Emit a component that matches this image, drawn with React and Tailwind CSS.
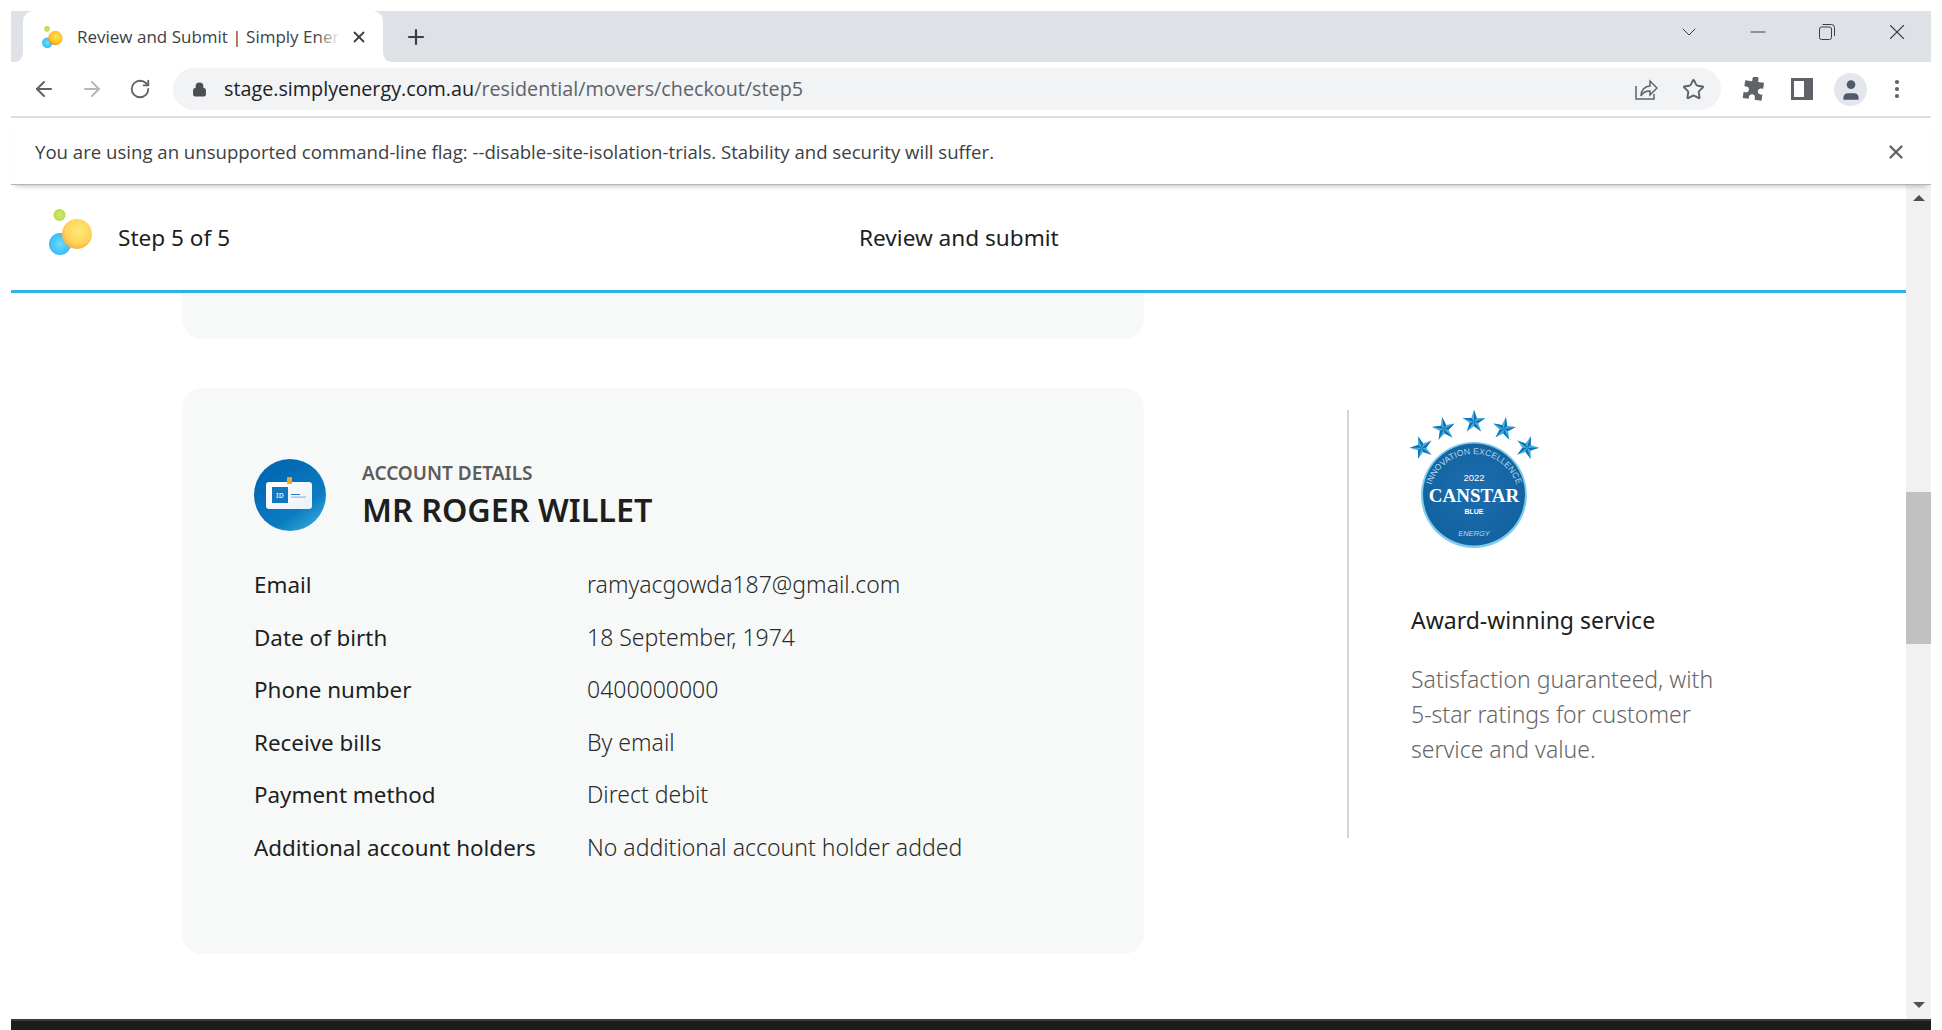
import { ArrowLeft, ArrowRight, RotateCw, Lock, Star, X, Plus, ChevronDown, Minus, MoreVertical, User } from 'lucide-react'

const pageFont = "font-['Noto_Sans',sans-serif]"
const chromeFont = "font-['Open_Sans',sans-serif]"

const rows = [
  ['Email', 'ramyacgowda187@gmail.com'],
  ['Date of birth', '18 September, 1974'],
  ['Phone number', '0400000000'],
  ['Receive bills', 'By email'],
  ['Payment method', 'Direct debit'],
  ['Additional account holders', 'No additional account holder added'],
]

function BubbleLogo({ size = 46, id = 'a', strong = false }) {
  return (
    <svg width={size} height={size} viewBox="0 0 46 46">
      <defs>
        <radialGradient id={`${id}-y`} cx="0.55" cy="0.4" r="0.65">
          <stop offset="0" stopColor={strong ? '#ffe24a' : '#ffe97a'} />
          <stop offset="0.65" stopColor={strong ? '#ffc524' : '#ffd45a'} />
          <stop offset="1" stopColor={strong ? '#ee7a18' : '#f7a83c'} />
        </radialGradient>
        <radialGradient id={`${id}-b`} cx="0.5" cy="0.5" r="0.6">
          <stop offset="0" stopColor="#6fdcff" />
          <stop offset="1" stopColor="#2eb4f2" />
        </radialGradient>
        <radialGradient id={`${id}-g`} cx="0.5" cy="0.5" r="0.6">
          <stop offset="0" stopColor="#d2e66c" />
          <stop offset="1" stopColor="#b4d84a" />
        </radialGradient>
      </defs>
      <circle cx="10.5" cy="6" r="6" fill={`url(#${id}-g)`} />
      <circle cx="11" cy="35" r="11" fill={`url(#${id}-b)`} />
      <circle cx="28" cy="25" r="15" fill={`url(#${id}-y)`} />
    </svg>
  )
}

function IdIcon() {
  return (
    <svg width="72" height="72" viewBox="0 0 72 72">
      <defs>
        <linearGradient id="id-bg" x1="0.3" y1="0.2" x2="0.9" y2="1">
          <stop offset="0" stopColor="#0369b5" />
          <stop offset="0.6" stopColor="#0b7cc0" />
          <stop offset="1" stopColor="#3db0dc" />
        </linearGradient>
        <linearGradient id="id-card" x1="0" y1="0" x2="1" y2="1">
          <stop offset="0" stopColor="#ffffff" />
          <stop offset="1" stopColor="#e9f1f8" />
        </linearGradient>
      </defs>
      <circle cx="36" cy="36" r="36" fill="url(#id-bg)" />
      <rect x="12" y="23" width="46" height="27" rx="3" fill="url(#id-card)" />
      <rect x="33" y="18" width="5" height="7" rx="1" fill="#f0a727" />
      <rect x="18" y="28" width="16" height="16" fill="#1477bd" />
      <text x="26" y="39" textAnchor="middle" fontSize="7" fontWeight="700" fill="#bfe0f5" fontFamily="Noto Sans, sans-serif">ID</text>
      <rect x="37" y="35" width="9" height="1" fill="#2a7fc0" />
      <rect x="37" y="37.5" width="15" height="1.2" fill="#8dbde0" />
    </svg>
  )
}

function polar(cx, cy, r, deg) {
  const a = ((deg - 90) * Math.PI) / 180
  return `${(cx + r * Math.cos(a)).toFixed(1)},${(cy + r * Math.sin(a)).toFixed(1)}`
}

// one star: light body with a darker facet on each arm
function BadgeStar({ x, y, rot }) {
  const r = 12
  const inner = r * 0.38
  const body = []
  const facets = []
  for (let i = 0; i < 5; i++) {
    const d = rot + i * 72
    body.push(polar(x, y, r, d), polar(x, y, inner, d + 36))
    facets.push(`${x},${y} ${polar(x, y, r, d)} ${polar(x, y, inner, d + 36)}`)
  }
  return (
    <g>
      <polygon points={body.join(' ')} fill="#45aee0" />
      {facets.map((f) => (
        <polygon key={f} points={f} fill="#0f6fae" />
      ))}
    </g>
  )
}

function CanstarBadge() {
  return (
    <svg width="132" height="140" viewBox="0 0 132 140" className="-ml-[3px]">
      <defs>
        <radialGradient id="disc" cx="0.5" cy="0.45" r="0.6">
          <stop offset="0" stopColor="#1f6cad" />
          <stop offset="1" stopColor="#10629f" />
        </radialGradient>
        <path id="arc" d="M 21 89 A 45 45 0 0 1 111 89" />
      </defs>
      <BadgeStar x={13.7} y={37.7} rot={-18} />
      <BadgeStar x={36} y={19} rot={-9} />
      <BadgeStar x={66} y={11.7} rot={0} />
      <BadgeStar x={96} y={19} rot={9} />
      <BadgeStar x={119} y={37.7} rot={18} />
      <circle cx="66" cy="85" r="53" fill="#7fcbec" />
      <circle cx="66" cy="84.5" r="51" fill="url(#disc)" />
      <text fontSize="8.5" fill="#b5d8ee" fontFamily="Liberation Sans, sans-serif" letterSpacing="0.1">
        <textPath href="#arc" startOffset="50%" textAnchor="middle">INNOVATION EXCELLENCE</textPath>
      </text>
      <text x="66" y="71" textAnchor="middle" fontSize="9.5" fill="#fff" fontFamily="Liberation Sans, sans-serif">2022</text>
      <text x="66" y="92" textAnchor="middle" fontSize="19" fontWeight="700" fill="#fff" fontFamily="Liberation Serif, serif">CANSTAR</text>
      <text x="66" y="104" textAnchor="middle" fontSize="7" fontWeight="700" fill="#fff" fontFamily="Liberation Sans, sans-serif">BLUE</text>
      <text x="66" y="126" textAnchor="middle" fontSize="7.5" fontStyle="italic" fill="#b5d8ee" fontFamily="Liberation Sans, sans-serif">ENERGY</text>
    </svg>
  )
}

function TabCorner({ flip }) {
  return (
    <svg width="10" height="10" viewBox="0 0 10 10" className={flip ? 'absolute bottom-0 -right-[10px] -scale-x-100' : 'absolute bottom-0 -left-[10px]'}>
      <path d="M10 0 V10 H0 Q10 10 10 0 Z" fill="#fff" />
    </svg>
  )
}

function TabStrip() {
  return (
    <div className="flex h-[51px] shrink-0 items-end bg-[#dee1e6]">
      <div className="relative ml-[12px] flex h-[51px] w-[360px] items-center rounded-t-[10px] bg-white pl-[19px]">
        <TabCorner />
        <TabCorner flip />
        <BubbleLogo size={22} id="fav" strong />
        <div className={`relative ml-[13px] w-[263px] overflow-hidden whitespace-nowrap text-[17px] text-[#3c4043] ${chromeFont}`}>
          Review and Submit | Simply Energy
          <div className="absolute inset-y-0 right-0 w-[24px] bg-gradient-to-r from-white/0 to-white" />
        </div>
        <X size={18} strokeWidth={2.4} className="ml-[10px] text-[#3c4043]" />
      </div>
      <Plus size={24} strokeWidth={2.2} className="mb-[13px] ml-[21px] text-[#3c4043]" />
      <div className="flex-1" />
      <div className="flex h-full items-center pb-[9px] text-[#3c4043]">
        <ChevronDown size={24} strokeWidth={1} />
        <Minus size={24} strokeWidth={1} className="ml-[45px]" />
        <svg width="16" height="16" viewBox="0 0 16 16" fill="none" stroke="currentColor" strokeWidth="1" className="ml-[49px]">
          <rect x="0.5" y="3" width="12" height="12.5" rx="2" />
          <path d="M3.5 0.5 H12.5 Q15.5 0.5 15.5 3.5 V12" />
        </svg>
        <X size={26} strokeWidth={1} className="ml-[49px] mr-[21px]" />
      </div>
    </div>
  )
}

function Toolbar() {
  return (
    <div className="flex h-[56px] shrink-0 items-center border-b-2 border-[#dcdcdc] text-[#5f6368]">
      <ArrowLeft size={24} strokeWidth={2} className="ml-[21px]" />
      <ArrowRight size={24} strokeWidth={2} className="ml-[24px] text-[#b4b7bb]" />
      <RotateCw size={22} strokeWidth={2} className="ml-[25px]" />
      <div className="ml-[22px] flex h-[42px] w-[1548px] items-center rounded-full bg-[#f1f3f4] pl-[19px]">
        <Lock size={15} strokeWidth={2.5} fill="currentColor" className="text-[#4a4d51]" />
        <div className={`ml-[17px] text-[19.75px] text-[#5f6368] ${chromeFont}`}>
          <span className="text-[#202124]">stage.simplyenergy.com.au</span>/residential/movers/checkout/step5
        </div>
        <div className="flex-1" />
        <svg width="24" height="24" viewBox="0 0 24 24" fill="none" stroke="currentColor" strokeWidth="1.5">
          <path d="M2 9 V22 H20 V17" />
          <path d="M7 19 C7 13 11 9 16 9 V4 L23 11 L16 18 V14 C12 14 9 15 7 19 Z" />
        </svg>
        <Star size={23} strokeWidth={2} className="ml-[24px] mr-[16px]" />
      </div>
      <svg width="24" height="24" viewBox="0 0 24 24" fill="currentColor" className="ml-[21px]">
        <path d="M9 1.5 a3 3 0 0 1 6 0 V4 h6 v6 h-2 a3 3 0 0 0 0 6 h2 v6 h-7 v-2 a3 3 0 0 0-6 0 v2 H2 v-6 h2 a3 3 0 0 0 0-6 H2 V4 h7 Z" transform="translate(0 0.5) rotate(8 12 12)" />
      </svg>
      <svg width="22" height="22" viewBox="0 0 22 22" className="ml-[25px]">
        <rect x="1.5" y="1.5" width="19" height="19" fill="none" stroke="currentColor" strokeWidth="3" />
        <rect x="13" y="1.5" width="7.5" height="19" fill="currentColor" />
      </svg>
      <div className="ml-[21px] flex h-[33px] w-[33px] items-center justify-center overflow-hidden rounded-full bg-[#e3e6ea]">
        <User size={26} strokeWidth={0} fill="#4e5a6e" className="translate-y-[1px]" />
      </div>
      <MoreVertical size={24} strokeWidth={2.2} className="ml-[18px]" />
    </div>
  )
}

function InfoBar() {
  return (
    <div className="relative z-10 flex h-[67px] shrink-0 items-center justify-between border-b border-[#b4b4b4] bg-white pl-[24px] pr-[24px] pt-[1px] shadow-[0_5px_5px_-4px_rgba(0,0,0,0.25)]">
      <span className={`text-[18.6px] text-[#3c4043] ${chromeFont}`}>
        You are using an unsupported command-line flag: --disable-site-isolation-trials. Stability and security will suffer.
      </span>
      <X size={22} strokeWidth={2.6} className="text-[#5f6368]" />
    </div>
  )
}

function Scrollbar() {
  return (
    <div className="flex w-[25px] shrink-0 flex-col items-center bg-[#f1f1f1]">
      <div className="mt-[10px] h-0 w-0 border-x-[6px] border-b-[6px] border-x-transparent border-b-[#505050]" />
      <div className="mt-[291px] h-[152px] w-full bg-[#c1c1c1]" />
      <div className="flex-1" />
      <div className="mb-[11px] h-0 w-0 border-x-[6px] border-t-[6px] border-x-transparent border-t-[#505050]" />
    </div>
  )
}

export default function App() {
  return (
    <div className="flex h-[1030px] w-[1942px] flex-col overflow-hidden bg-white px-[11px] pt-[11px]">
      <TabStrip />
      <Toolbar />
      <InfoBar />
      <div className={`flex min-h-0 flex-1 ${pageFont}`}>
        <div className="min-w-0 flex-1">
          <header className="flex h-[108px] items-center border-b-[3px] border-[#2eb1e3] pl-[38px]">
            <div className="-mt-[11px]">
              <BubbleLogo id="head" />
            </div>
            <span className="ml-[23px] w-[741px] text-[22.6px] text-[#1e1e1e]">Step 5 of 5</span>
            <span className="text-[22.6px] text-[#1e1e1e]">Review and submit</span>
          </header>

          <div className="flex">
            <div className="ml-[171px] w-[962px]">
              <div className="h-[46px] rounded-b-[20px] bg-[#f7f9f9]" />
              <section className="mt-[49px] h-[566px] rounded-[20px] bg-[#f7f9f9] pl-[72px] pt-[71px]">
                <div className="flex items-start gap-[36px]">
                  <IdIcon />
                  <div className="pt-[3px]">
                    <div className="text-[19px] font-semibold leading-[22px] text-[#5c5c5c]">ACCOUNT DETAILS</div>
                    <h2 className="mt-[4px] text-[32.3px] font-semibold leading-[42px] text-[#1e1e1e]">MR ROGER WILLET</h2>
                  </div>
                </div>
                <dl className="mt-[27px] grid auto-rows-[52.6px] grid-cols-[333px_1fr] items-baseline text-[23px] leading-[52.6px]">
                  {rows.map(([label, value]) => (
                    <div key={label} className="contents">
                      <dt className="text-[22.4px] text-[#1e1e1e]">{label}</dt>
                      <dd className="font-light text-[#2b2b2b]">{value}</dd>
                    </div>
                  ))}
                </dl>
              </section>
            </div>

            <aside className="ml-[203px] mt-[117px] h-[428px] w-[420px] border-l-2 border-[#d4d6d6] pl-[62px]">
              <CanstarBadge />
              <h3 className="mt-[53px] text-[23px] text-[#1e1e1e]">Award-winning service</h3>
              <p className="mt-[24px] w-[310px] text-[23px] font-light leading-[35px] text-[#666]">
                Satisfaction guaranteed, with 5-star ratings for customer service and value.
              </p>
            </aside>
          </div>
        </div>
        <Scrollbar />
      </div>
      <div className="h-[11px] shrink-0 border-t-2 border-[#3a3a3a] bg-[#1c1c1c]" />
    </div>
  )
}
